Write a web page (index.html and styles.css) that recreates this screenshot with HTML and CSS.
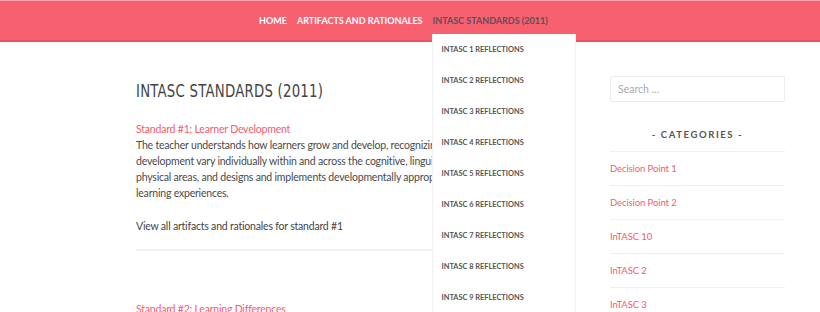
FILE: index.html
```html
<!DOCTYPE html>
<html>
<head>
<meta charset="utf-8">
<link rel="stylesheet" href="styles.css">
</head>
<body>
<header class="topbar">
  <nav class="menu">
    <a class="menu-item" href="#">HOME</a>
    <a class="menu-item" href="#">ARTIFACTS AND RATIONALES</a>
    <div class="menu-parent">
      <a class="menu-item current" href="#">INTASC STANDARDS (2011)</a>
      <ul class="submenu">
        <li><a href="#">INTASC 1 REFLECTIONS</a></li>
        <li><a href="#">INTASC 2 REFLECTIONS</a></li>
        <li><a href="#">INTASC 3 REFLECTIONS</a></li>
        <li><a href="#">INTASC 4 REFLECTIONS</a></li>
        <li><a href="#">INTASC 5 REFLECTIONS</a></li>
        <li><a href="#">INTASC 6 REFLECTIONS</a></li>
        <li><a href="#">INTASC 7 REFLECTIONS</a></li>
        <li><a href="#">INTASC 8 REFLECTIONS</a></li>
        <li><a href="#">INTASC 9 REFLECTIONS</a></li>
      </ul>
    </div>
  </nav>
</header>
<div class="page">
  <main class="content">
    <h1 class="page-title"><span class="title-text">INTASC STANDARDS (2011)</span></h1>
    <section class="standard">
      <a class="std-link" href="#">Standard #1: Learner Development</a>
      <p class="std-text">The teacher understands how learners grow and develop, recognizing that patterns of learning and<br>development vary individually within and across the cognitive, linguistic, social, emotional, and<br>physical areas, and designs and implements developmentally appropriate and challenging<br>learning experiences.</p>
      <p class="std-more">View all artifacts and rationales for standard #1</p>
    </section>
    <section class="standard second">
      <a class="std-link" href="#">Standard #2: Learning Differences</a>
    </section>
  </main>
  <aside class="sidebar">
    <div class="search"><span class="placeholder">Search …</span></div>
    <h3 class="widget-title">- CATEGORIES -</h3>
    <ul class="cats">
      <li><a href="#">Decision Point 1</a></li>
      <li><a href="#">Decision Point 2</a></li>
      <li><a href="#">InTASC 10</a></li>
      <li><a href="#">InTASC 2</a></li>
      <li><a href="#">InTASC 3</a></li>
    </ul>
  </aside>
</div>
</body>
</html>
```
FILE: styles.css
```css
html, body {
  margin: 0;
  padding: 0;
  background: #fff;
  overflow: hidden;
  height: 312px;
}
body {
  font-family: "Lato", "Liberation Sans", sans-serif;
  color: #444;
}
a { text-decoration: none; }
ul { list-style: none; margin: 0; padding: 0; }

.topbar {
  height: 39px;
  background: #f7606f;
  border-top: 1px solid #f8a3ac;
  border-bottom: 2px solid #e55565;
  position: relative;
  z-index: 2;
}
.menu {
  display: flex;
  padding-left: 259px;
  gap: 10px;
  height: 100%;
  align-items: center;
}
.menu-item {
  font-family: "Lato", sans-serif;
  font-weight: 700;
  font-size: 9px;
  color: #fff;
  line-height: 39px;
  display: block;
}
.menu-item.current { color: #5a5158; }
.menu-parent { position: relative; }
.submenu {
  position: absolute;
  top: 33px;
  left: -1px;
  width: 142px;
  background: #fff;
  border: 1px solid #f2f2f2;
  border-top: none;
  padding-top: 4px;
}
.submenu li a {
  display: block;
  font-family: "Lato", sans-serif;
  font-weight: 700;
  font-size: 7.4px;
  color: #555;
  height: 31px;
  line-height: 23px;
  padding-left: 9px;
}

.page {
  display: flex;
  padding-left: 136px;
  gap: 34px;
}
.content { width: 440px; }
.page-title {
  font-family: "DejaVu Sans Condensed", sans-serif;
  font-weight: 400;
  font-size: 18px;
  color: #444;
  margin: 35px 0 0;
  line-height: 28px;
}
.title-text {
  display: inline-block;
  transform: scaleX(0.82);
  transform-origin: left center;
  letter-spacing: 0.3px;
}
.standard { font-size: 10.5px; letter-spacing: -0.2px; line-height: 16px; }
.std-link {
  display: block;
  color: #f45c6d;
  margin-top: 16px;
}
.std-text { margin: 0; color: #4a4a4a; white-space: nowrap; }
.std-more {
  margin: 17px 0 0;
  padding-bottom: 15px;
  border-bottom: 2px solid #f0f0f0;
}
.second .std-link { margin-top: 50px; }

.sidebar { width: 175px; }
.search {
  margin-top: 34px;
  height: 24px;
  border: 1px solid #ececec;
  border-radius: 2px;
  display: flex;
  align-items: center;
  padding-left: 7px;
}
.placeholder { font-size: 10.5px; color: #aaa; }
.widget-title {
  text-align: center;
  font-family: "Lato", sans-serif;
  font-weight: 700;
  font-size: 9.5px;
  letter-spacing: 1.6px;
  color: #555;
  margin: 27px 0 0;
  padding-bottom: 11px;
  border-bottom: 1px solid #f0f0f0;
}
.cats li {
  border-bottom: 1px solid #f0f0f0;
  height: 33px;
  line-height: 33px;
  font-family: "Lato", sans-serif;
  font-size: 9.5px;
  letter-spacing: -0.1px;
}
.cats a { color: #f45c6d; }
```
